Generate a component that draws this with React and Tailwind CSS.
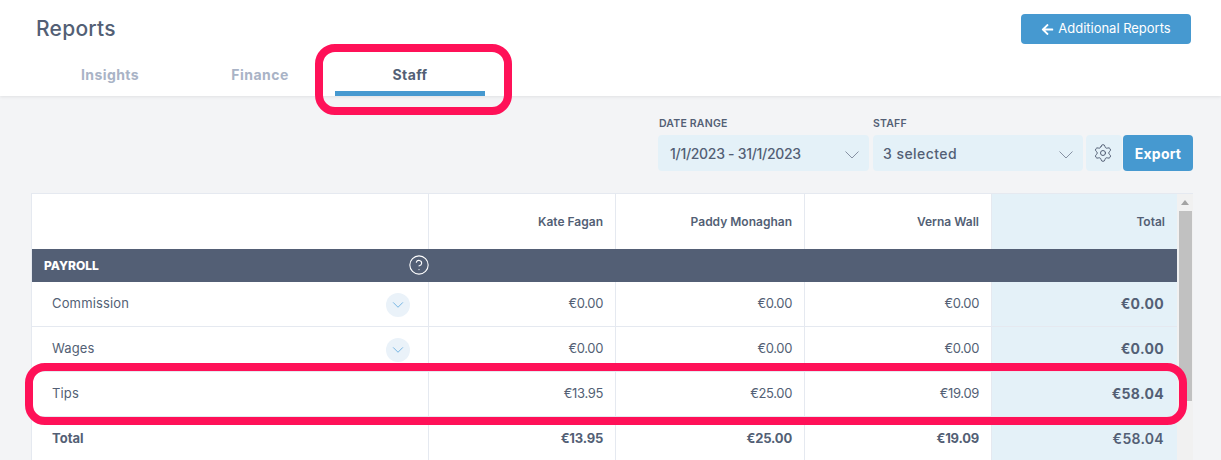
import { Settings, CircleHelp } from 'lucide-react'
import { FaArrowLeft } from 'react-icons/fa'

const rows = [
  { name: 'Commission', values: ['€0.00', '€0.00', '€0.00'], total: '€0.00', expand: true },
  { name: 'Wages', values: ['€0.00', '€0.00', '€0.00'], total: '€0.00', expand: true },
  { name: 'Tips', values: ['€13.95', '€25.00', '€19.09'], total: '€58.04' },
]

function Chevron({ className }) {
  return (
    <svg className={className} viewBox="0 0 14 8" fill="none" stroke="currentColor" strokeWidth="0.9">
      <path d="M0.5 0.5 L7 7 L13.5 0.5" />
    </svg>
  )
}

function Tabs() {
  return (
    <div className="flex pl-[35px] h-[46px]">
      <div className="w-[150px] pt-[14px] text-center text-[14px] font-bold tracking-[0.4px] text-[#a9b3c6]">Insights</div>
      <div className="w-[150px] pt-[14px] text-center text-[14px] font-bold tracking-[0.5px] text-[#a9b3c6]">Finance</div>
      <div className="w-[150px] pt-[14px] text-center text-[14px] font-bold tracking-[0.35px] text-[#535f75] border-b-[5px] border-[#4699d0]">Staff</div>
    </div>
  )
}

function Filters() {
  return (
    <div className="flex justify-end items-end pr-[28px] pb-[22px] h-[97px]">
      <div className="w-[211px] mr-[4px]">
        <div className="text-[10.5px] font-semibold text-[#535f75] mb-[5px] leading-[13px] tracking-[0.2px] pl-px">DATE RANGE</div>
        <div className="h-[36px] rounded bg-[#e4f1f8] flex items-center justify-between pl-[12px] pr-[10px] text-[14px] font-medium tracking-[-0.3px] text-[#535f75]">
          <span>1/1/2023 - 31/1/2023</span>
          <Chevron className="w-[14px] h-[8px] mt-[3px] text-[#7b8698]" />
        </div>
      </div>
      <div className="w-[210px] mr-[3px]">
        <div className="text-[10.5px] font-semibold text-[#535f75] mb-[5px] leading-[13px] tracking-[0.2px]">STAFF</div>
        <div className="h-[36px] rounded bg-[#e4f1f8] flex items-center justify-between pl-[10px] pr-[10px] text-[14px] font-medium tracking-[0.45px] text-[#535f75]">
          <span>3 selected</span>
          <Chevron className="w-[14px] h-[8px] mt-[3px] text-[#7b8698]" />
        </div>
      </div>
      <div className="w-[36px] h-[36px] mr-px rounded bg-[#e4f1f8] flex items-center justify-center text-[#535f75]">
        <Settings size={20} strokeWidth={1.2} className="-ml-[2px] -mt-px" />
      </div>
      <div className="w-[70px] h-[36px] rounded bg-[#4699d0] flex items-center justify-center text-white text-[14px] font-bold tracking-[0.2px]">Export</div>
    </div>
  )
}

function Row({ row }) {
  return (
    <div className="grid grid-cols-[397px_187px_189px_187px_185px] h-[45px] text-[13px] text-[#535f75]">
      <div className="flex items-center justify-between pl-[20px] pr-[18px] border-r border-b border-[#e5e9f0]">
        <span className="tracking-[0.15px] -mt-px">{row.name}</span>
        {row.expand && (
          <div className="w-[24px] h-[24px] rounded-full bg-[#eaf2f9] flex items-center justify-center mt-[2px]">
            <Chevron className="w-[12px] h-[6px] text-[#3f97d6]" />
          </div>
        )}
      </div>
      {row.values.map((v, i) => (
        <div key={i} className="flex items-center justify-end pr-[12px] border-r border-b border-[#e5e9f0] tracking-[-0.35px]">
          <span className="-mt-px">{v}</span>
        </div>
      ))}
      <div className="flex items-center justify-end pr-[13px] bg-[#e4f1f8] border-b border-[#e5e9f0] text-[14px] font-bold tracking-[0.3px]">
        <span className="-mt-px">{row.total}</span>
      </div>
    </div>
  )
}

function Scrollbar() {
  return (
    <div className="w-[16px] bg-[#f1f1f1] flex flex-col items-center">
      <div className="h-[17px] flex items-center justify-center">
        <div className="w-0 h-0 border-x-[4px] border-x-transparent border-b-[5px] border-b-[#a3a3a3]" />
      </div>
      <div className="w-[13px] h-[190px] bg-[#c1c1c1]" />
    </div>
  )
}

export default function App() {
  return (
    <div className="relative w-[1221px] h-[460px] overflow-hidden bg-[#f3f4f6] font-['Inter',sans-serif]">
      <header className="h-[96px] bg-white shadow-[0_1px_3px_rgba(0,0,0,0.08)]">
        <div className="flex justify-between items-start pl-[36px] pr-[30px] pt-[14px] h-[50px]">
          <h1 className="text-[21px] leading-[30px] font-medium tracking-[0.25px] text-[#535f75]">Reports</h1>
          <button className="w-[170px] h-[30px] rounded bg-[#4699d0] text-white text-[13px] flex items-center justify-center gap-[4px] tracking-[-0.02px]">
            <FaArrowLeft size={13} />
            Additional Reports
          </button>
        </div>
        <Tabs />
      </header>

      <Filters />

      <div className="ml-[31px] w-[1162px] border-t border-l border-[#e5e9f0] flex">
        <div className="w-[1145px]">
          <div className="grid grid-cols-[397px_187px_189px_187px_185px] h-[55px] bg-white text-[12px] font-semibold text-[#535f75]">
            <div className="border-r border-[#e5e9f0]" />
            <div className="flex items-center justify-end pr-[12px] border-r border-[#e5e9f0]">Kate Fagan</div>
            <div className="flex items-center justify-end pr-[12px] border-r border-[#e5e9f0]">Paddy Monaghan</div>
            <div className="flex items-center justify-end pr-[12px] border-r border-[#e5e9f0]">Verna Wall</div>
            <div className="flex items-center justify-end pr-[12px] bg-[#e4f1f8]">Total</div>
          </div>
          <div className="h-[33px] bg-[#535f75] flex items-center justify-between pl-[12px] text-white text-[12px] font-extrabold">
            <span>PAYROLL</span>
            <CircleHelp size={22} strokeWidth={1.2} className="mr-[747px] -mt-[2px]" />
          </div>
          <div className="bg-white">
            {rows.map((r) => <Row key={r.name} row={r} />)}
            <div className="grid grid-cols-[397px_187px_189px_187px_185px] h-[45px] text-[13px] font-bold text-[#535f75]">
              <div className="flex items-center pl-[20px] border-r border-[#e5e9f0]"><span className="-mt-[2px]">Total</span></div>
              {['€13.95', '€25.00', '€19.09'].map((v) => (
                <div key={v} className="flex items-center justify-end pr-[12px] border-r border-[#e5e9f0] tracking-[-0.2px]">
                  <span className="-mt-[2px]">{v}</span>
                </div>
              ))}
              <div className="flex items-center justify-end pr-[13px] bg-[#e4f1f8] text-[14px] font-semibold tracking-[0.3px]"><span className="-mt-[2px]">€58.04</span></div>
            </div>
          </div>
        </div>
        <Scrollbar />
      </div>

      {/* highlight annotations drawn over the screenshot */}
      <div className="absolute left-[315px] top-[44px] w-[197px] h-[71px] border-[8px] border-[#ff1158] rounded-[20px]" />
      <div className="absolute left-[25px] top-[363px] w-[1162px] h-[62px] border-[8px] border-[#ff1158] rounded-[20px]" />
    </div>
  )
}
